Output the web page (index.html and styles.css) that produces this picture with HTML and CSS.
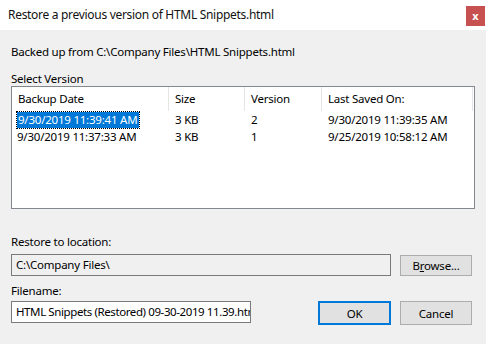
FILE: index.html
```html
<!DOCTYPE html>
<html>
<head>
<meta charset="utf-8">
<link rel="stylesheet" href="styles.css">
</head>
<body>
<div class="dialog">
  <div class="titlebar">
    <span class="title">Restore a previous version of HTML Snippets.html</span>
    <button class="close">x</button>
  </div>
  <div class="content">
    <div class="source">Backed up from C:\Company Files\HTML Snippets.html</div>
    <div class="label select-label">Select Version</div>
    <div class="listbox">
      <div class="row header">
        <div class="cell c1">Backup Date</div>
        <div class="cell c2">Size</div>
        <div class="cell c3">Version</div>
        <div class="cell c4">Last Saved On:</div>
      </div>
      <div class="row item">
        <div class="cell c1"><span class="selected">9/30/2019 11:39:41 AM</span></div>
        <div class="cell c2">3 KB</div>
        <div class="cell c3">2</div>
        <div class="cell c4">9/30/2019 11:39:35 AM</div>
      </div>
      <div class="row item">
        <div class="cell c1">9/30/2019 11:37:33 AM</div>
        <div class="cell c2">3 KB</div>
        <div class="cell c3">1</div>
        <div class="cell c4">9/25/2019 10:58:12 AM</div>
      </div>
    </div>
    <div class="label location-label">Restore to location:</div>
    <div class="line">
      <div class="textbox readonly">C:\Company Files\</div>
      <button class="btn browse">B<u>r</u>owse...</button>
    </div>
    <div class="label filename-label">Filename:</div>
    <div class="line">
      <div class="textbox filename">HTML Snippets (Restored) 09-30-2019 11.39.htm</div>
      <button class="btn default">OK</button>
      <button class="btn cancel">Cancel</button>
    </div>
  </div>
</div>
</body>
</html>
```

FILE: styles.css
```css
* { box-sizing: border-box; }
html, body { margin: 0; padding: 0; }
body {
  width: 486px;
  height: 344px;
  overflow: hidden;
  font-family: "Noto Sans", "Open Sans", sans-serif;
  font-size: 11.5px;
  letter-spacing: -0.22px;
  color: #000;
  background: #f0f0f0;
}
.dialog { width: 486px; height: 344px; display: flex; flex-direction: column; }
.titlebar {
  height: 30px;
  background: #fff;
  display: flex;
  align-items: flex-start;
  justify-content: space-between;
  padding: 0 1px 0 8px;
}
.title { font-size: 12px; letter-spacing: -0.3px; line-height: 16px; margin-top: 7px; color: #111; }
.close {
  width: 19px; height: 20px;
  margin-top: 6px;
  background: #c75050;
  color: #fff;
  border: none;
  font: bold 11px "Noto Sans", sans-serif;
  line-height: 18px;
  padding: 0;
}
.content { flex: 1; padding: 14px 12px 0 11px; display: flex; flex-direction: column; }
.source { height: 16px; line-height: 16px; }
.label { line-height: 14px; height: 14px; }
.select-label { margin-top: 12px; }
.listbox {
  width: 464px;
  height: 123px;
  background: #fff;
  border: 1px solid #828790;
}
.row { display: flex; }
.header { height: 24px; }
.header .cell { height: 24px; line-height: 24px; border-right: 1px solid #e5e5e5; }
.item { height: 17px; line-height: 17px; }
.cell { padding-left: 6px; white-space: nowrap; }
.c1 { width: 157px; }
.c2 { width: 76px; }
.c3 { width: 77px; }
.c4 { width: 151px; }
.item .c1 { padding-left: 5px; }
.selected {
  display: inline-block;
  background: #0078d7;
  color: #fff;
  outline: 1px dotted #000;
  padding: 0 2px 0 1px;
  line-height: 16px;
}
.location-label { margin-top: 26px; }
.line { display: flex; align-items: flex-start; }
.textbox {
  height: 22px;
  border: 1px solid #7a7a7a;
  padding-left: 4px;
  line-height: 20px;
  white-space: nowrap;
  overflow: hidden;
}
.readonly { width: 380px; background: #f0f0f0; margin-top: 5px; }
.filename { width: 240px; background: #fff; margin-top: 3px; letter-spacing: -0.4px; }
.btn {
  font: inherit;
  letter-spacing: inherit;
  background: #e1e1e1;
  border: 1px solid #adadad;
  width: 72px;
  padding: 0;
  color: #000;
}
.browse { height: 21px; margin-top: 6px; margin-left: 9px; line-height: 19px; }
.default { border: 2px solid #0078d7; height: 24px; width: 73px; margin-top: 3px; margin-left: 67px; }
.cancel { height: 24px; margin-top: 3px; margin-left: 9px; }
.filename-label { margin-top: 8px; }
```
